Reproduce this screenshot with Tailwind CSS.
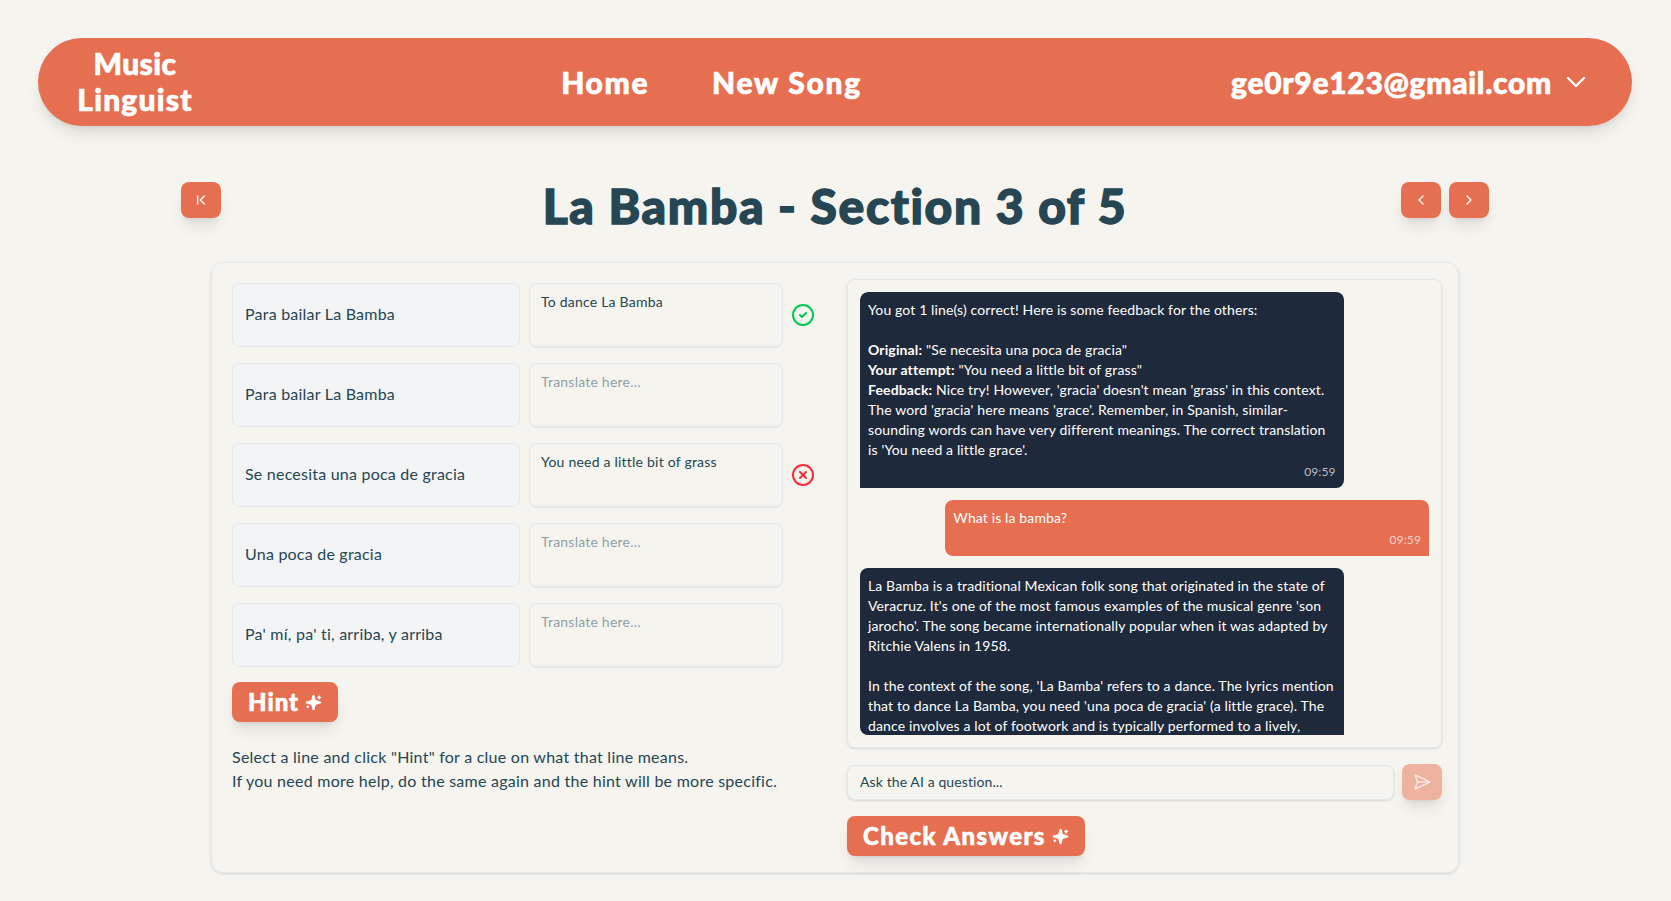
<!DOCTYPE html>
<html lang="en">
<head>
  <meta charset="UTF-8" />
  <title>Music Linguist</title>
  <script src="https://cdn.jsdelivr.net/npm/@tailwindcss/browser@4"></script>
</head>
<body class="min-h-screen bg-[#f5f4ef] text-[#264653] font-['Lato','Noto_Sans',sans-serif]">
  <nav class="ml-[38px] mr-[39px] mt-[38px] h-[88px] rounded-full bg-[#e76f51] shadow-lg px-10 flex items-center justify-between text-white text-3xl font-black [-webkit-text-stroke:0.7px_white]">
    <div class="w-[114px] -mt-0.5 text-center leading-9 whitespace-nowrap flex flex-col items-center"><span class="tracking-[0.4px]">Music</span><span class="tracking-[1.2px]">Linguist</span></div>
    <div class="flex gap-[63px]"><a class="tracking-[1.6px]">Home</a><a class="tracking-[1.7px]">New Song</a></div>
    <div class="flex items-center gap-2">
      <span class="tracking-[0.7px]">ge0r9e123@gmail.com</span>
      <svg class="size-8" viewBox="0 0 24 24" fill="none" stroke="currentColor" stroke-width="1.75" stroke-linecap="round" stroke-linejoin="round"><path d="m6 9 6 6 6-6"/></svg>
    </div>
  </nav>

  <header class="mt-14 ml-[181px] w-[1308px] h-12 mb-8 grid grid-cols-[1fr_auto_1fr] items-start">
    <div>
      <button class="w-10 h-9 rounded-lg bg-[#e76f51] text-white shadow-lg flex items-center justify-center">
        <svg class="size-4" viewBox="0 0 24 24" fill="none" stroke="currentColor" stroke-width="2" stroke-linecap="round" stroke-linejoin="round"><path d="m17 18-6-6 6-6"/><path d="M7 6v12"/></svg>
      </button>
    </div>
    <h1 class="text-5xl font-black text-center whitespace-nowrap tracking-[1.6px] [-webkit-text-stroke:1.4px_#264653]">La Bamba - Section 3 of 5</h1>
    <div class="flex justify-end gap-2">
      <button class="w-10 h-9 rounded-lg bg-[#e76f51] text-white shadow-lg flex items-center justify-center">
        <svg class="size-4" viewBox="0 0 24 24" fill="none" stroke="currentColor" stroke-width="2" stroke-linecap="round" stroke-linejoin="round"><path d="m15 18-6-6 6-6"/></svg>
      </button>
      <button class="w-10 h-9 rounded-lg bg-[#e76f51] text-white shadow-lg flex items-center justify-center">
        <svg class="size-4" viewBox="0 0 24 24" fill="none" stroke="currentColor" stroke-width="2" stroke-linecap="round" stroke-linejoin="round"><path d="m9 18 6-6-6-6"/></svg>
      </button>
    </div>
  </header>

  <main class="ml-[211px] w-[1248px] rounded-xl border border-gray-200 shadow pl-5 pr-4 pt-4 pb-4 flex justify-between">
    <section class="w-[584px] pt-1 tracking-[0.22px]">
      <div class="flex flex-col gap-4">
        <div class="flex items-center gap-[9px]">
          <div class="w-[288px] h-16 pb-0.5 rounded-lg border border-gray-200 bg-gray-100 px-3 flex items-center">Para bailar La Bamba</div>
          <textarea class="w-[254px] h-16 resize-none rounded-lg border border-gray-200 shadow-xs px-[11px] py-2 text-sm">To dance La Bamba</textarea>
          <svg class="size-6 -ml-px text-green-500" viewBox="0 0 24 24" fill="none" stroke="currentColor" stroke-width="2" stroke-linecap="round" stroke-linejoin="round"><circle cx="12" cy="12" r="10"/><path d="m9 12 2 2 4-4"/></svg>
        </div>
        <div class="flex items-center gap-[9px]">
          <div class="w-[288px] h-16 pb-0.5 rounded-lg border border-gray-200 bg-gray-100 px-3 flex items-center">Para bailar La Bamba</div>
          <textarea class="w-[254px] h-16 resize-none rounded-lg border border-gray-200 shadow-xs px-[11px] py-2 text-sm" placeholder="Translate here..."></textarea>
        </div>
        <div class="flex items-center gap-[9px]">
          <div class="w-[288px] h-16 pb-0.5 rounded-lg border border-gray-200 bg-gray-100 px-3 flex items-center">Se necesita una poca de gracia</div>
          <textarea class="w-[254px] h-16 resize-none rounded-lg border border-gray-200 shadow-xs px-[11px] py-2 text-sm">You need a little bit of grass</textarea>
          <svg class="size-6 -ml-px text-red-500" viewBox="0 0 24 24" fill="none" stroke="currentColor" stroke-width="2" stroke-linecap="round" stroke-linejoin="round"><circle cx="12" cy="12" r="10"/><path d="m15 9-6 6"/><path d="m9 9 6 6"/></svg>
        </div>
        <div class="flex items-center gap-[9px]">
          <div class="w-[288px] h-16 pb-0.5 rounded-lg border border-gray-200 bg-gray-100 px-3 flex items-center">Una poca de gracia</div>
          <textarea class="w-[254px] h-16 resize-none rounded-lg border border-gray-200 shadow-xs px-[11px] py-2 text-sm" placeholder="Translate here..."></textarea>
        </div>
        <div class="flex items-center gap-[9px]">
          <div class="w-[288px] h-16 pb-0.5 rounded-lg border border-gray-200 bg-gray-100 px-3 flex items-center">Pa' mí, pa' ti, arriba, y arriba</div>
          <textarea class="w-[254px] h-16 resize-none rounded-lg border border-gray-200 shadow-xs px-[11px] py-2 text-sm" placeholder="Translate here..."></textarea>
        </div>
      </div>
      <button class="mt-[15px] h-10 px-4 rounded-lg bg-[#e76f51] text-white text-2xl font-black tracking-[1px] shadow-lg flex items-center gap-1.5 [-webkit-text-stroke:0.6px_white]">
        Hint
        <svg class="size-[17px]" viewBox="0 0 24 24" fill="currentColor" stroke="currentColor" stroke-width="2" stroke-linecap="round" stroke-linejoin="round"><path d="M9.937 15.5A2 2 0 0 0 8.5 14.063l-6.135-1.582a.5.5 0 0 1 0-.962L8.5 9.936A2 2 0 0 0 9.937 8.5l1.582-6.135a.5.5 0 0 1 .963 0L14.063 8.5A2 2 0 0 0 15.5 9.937l6.135 1.581a.5.5 0 0 1 0 .964L15.5 14.063a2 2 0 0 0-1.437 1.437l-1.582 6.135a.5.5 0 0 1-.963 0z"/><path d="M20 3v4"/><path d="M22 5h-4"/><path d="M4 17v2"/><path d="M5 18H3"/></svg>
      </button>
      <p class="mt-[23px] leading-6 tracking-[0.25px]">Select a line and click "Hint" for a clue on what that line means.<br />If you need more help, do the same again and the hint will be more specific.</p>
    </section>

    <section class="w-[595px] flex flex-col gap-4">
      <div class="h-[469px] rounded-lg border border-gray-200 shadow-sm p-3">
        <div class="h-full overflow-hidden rounded-lg flex flex-col gap-3 text-sm text-white tracking-[0.13px]">
          <div class="w-[85%] shrink-0 rounded-lg rounded-bl-none bg-[#1e293b] px-2 py-2">
            <p>You got 1 line(s) correct! Here is some feedback for the others:<br /><br /><b>Original:</b> "Se necesita una poca de gracia"<br /><b>Your attempt:</b> "You need a little bit of grass"<br /><b>Feedback:</b> Nice try! However, 'gracia' doesn't mean 'grass' in this context. The word 'gracia' here means 'grace'. Remember, in Spanish, similar-sounding words can have very different meanings. The correct translation is 'You need a little grace'.</p>
            <p class="mt-1 text-xs text-right text-white/70">09:59</p>
          </div>
          <div class="w-[85%] shrink-0 self-end rounded-lg rounded-br-none bg-[#e76f51] px-2 py-2">
            <p>What is la bamba?</p>
            <p class="mt-1 text-xs text-right text-white/70">09:59</p>
          </div>
          <div class="w-[85%] shrink-0 rounded-lg rounded-bl-none bg-[#1e293b] px-2 py-2">
            <p>La Bamba is a traditional Mexican folk song that originated in the state of Veracruz. It's one of the most famous examples of the musical genre 'son jarocho'. The song became internationally popular when it was adapted by Ritchie Valens in 1958.<br /><br />In the context of the song, 'La Bamba' refers to a dance. The lyrics mention that to dance La Bamba, you need 'una poca de gracia' (a little grace). The dance involves a lot of footwork and is typically performed to a lively, upbeat rhythm.</p>
          </div>
        </div>
      </div>
      <div class="flex items-center gap-2">
        <input class="flex-1 h-[35px] pb-0.5 rounded-lg border border-gray-200 shadow-sm px-3 text-sm tracking-[0.1px] placeholder:text-[#264653]" placeholder="Ask the AI a question..." />
        <button class="w-10 h-9 rounded-lg bg-[#e76f51]/50 text-white/70 shadow-lg flex items-center justify-center">
          <svg class="size-[18px]" viewBox="0 0 24 24" fill="none" stroke="currentColor" stroke-width="2" stroke-linecap="round" stroke-linejoin="round"><path d="M3.714 3.048a.498.498 0 0 0-.683.627l2.843 7.627a2 2 0 0 1 0 1.396l-2.842 7.627a.498.498 0 0 0 .682.627l18-8.5a.5.5 0 0 0 0-.904z"/><path d="M6 12h16"/></svg>
        </button>
      </div>
      <button class="self-start h-10 px-4 rounded-lg bg-[#e76f51] text-white text-2xl font-black tracking-[1.4px] shadow-lg flex items-center gap-1.5 [-webkit-text-stroke:0.6px_white]">
        Check Answers
        <svg class="size-[17px]" viewBox="0 0 24 24" fill="currentColor" stroke="currentColor" stroke-width="2" stroke-linecap="round" stroke-linejoin="round"><path d="M9.937 15.5A2 2 0 0 0 8.5 14.063l-6.135-1.582a.5.5 0 0 1 0-.962L8.5 9.936A2 2 0 0 0 9.937 8.5l1.582-6.135a.5.5 0 0 1 .963 0L14.063 8.5A2 2 0 0 0 15.5 9.937l6.135 1.581a.5.5 0 0 1 0 .964L15.5 14.063a2 2 0 0 0-1.437 1.437l-1.582 6.135a.5.5 0 0 1-.963 0z"/><path d="M20 3v4"/><path d="M22 5h-4"/><path d="M4 17v2"/><path d="M5 18H3"/></svg>
      </button>
    </section>
  </main>
</body>
</html>
